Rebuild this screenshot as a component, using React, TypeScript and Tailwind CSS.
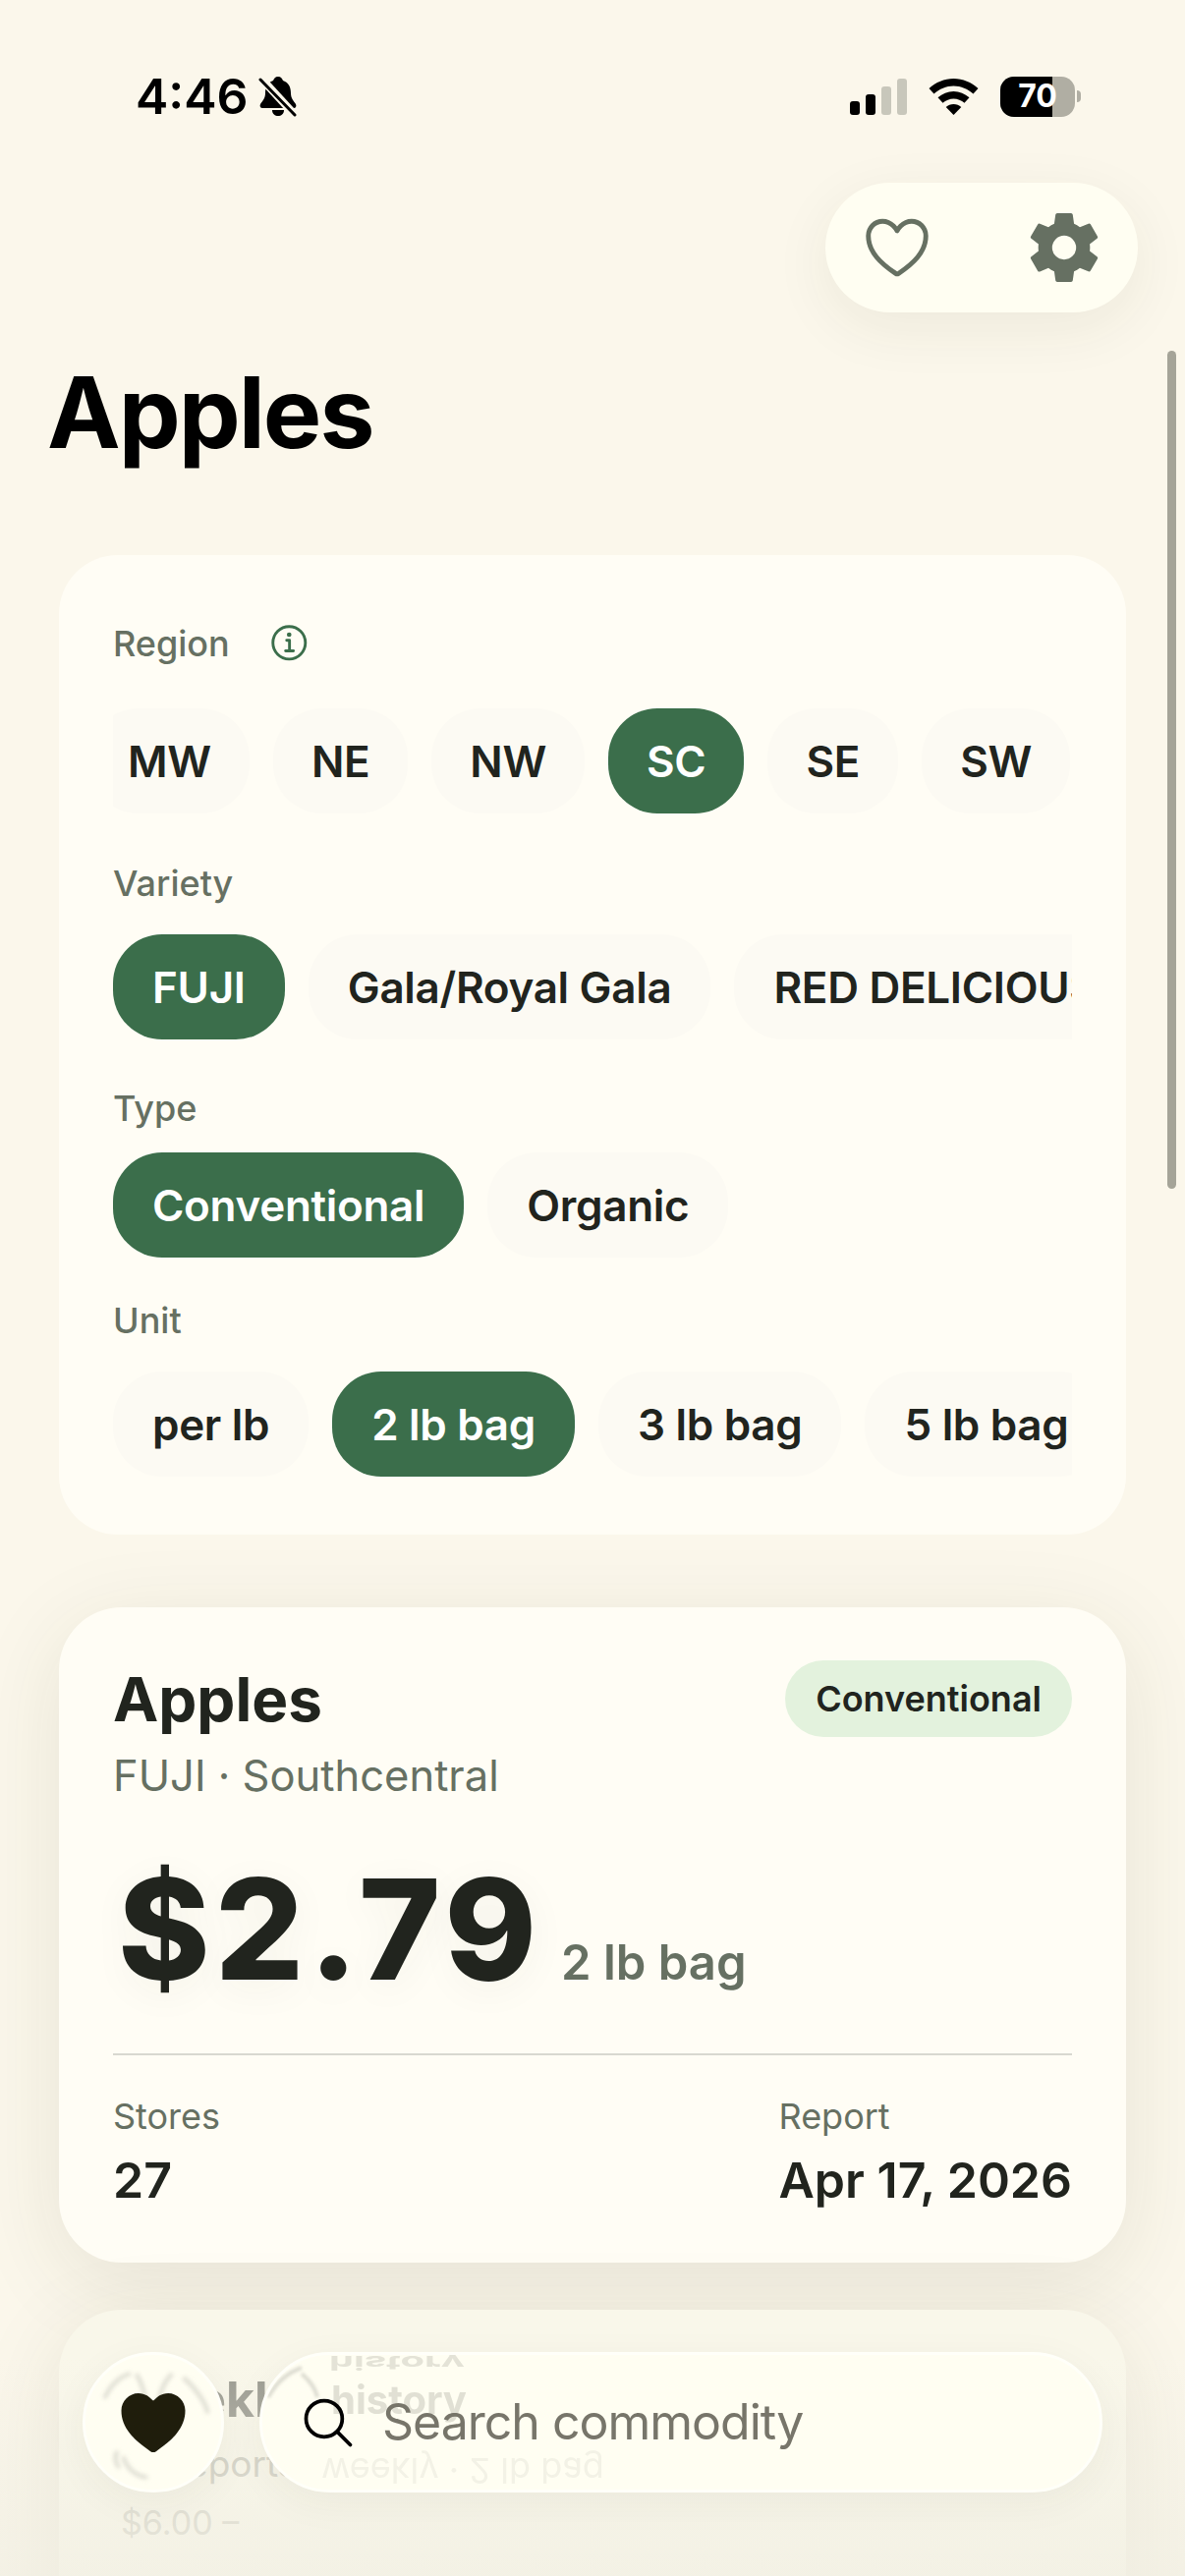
import { IoHeart, IoHeartOutline, IoInformationCircleOutline, IoSearchOutline, IoSettingsSharp } from "react-icons/io5";

const regions = ["MW", "NE", "NW", "SC", "SE", "SW"];
const varieties = ["FUJI", "Gala/Royal Gala", "RED DELICIOUS"];
const types = ["Conventional", "Organic"];
const units = ["per lb", "2 lb bag", "3 lb bag", "5 lb bag"];

function Chip({ label, active, tight }: { label: string; active?: boolean; tight?: boolean }) {
  return (
    <div
      className={`h-[107px] shrink-0 flex items-center rounded-[50px] text-[44px] font-[570] tracking-[-0.3px] ${tight ? "px-[39px]" : "px-[40px]"} ${
        active ? "bg-[#3b6e4b] text-white" : "bg-[#fcfaf3] text-[#21241e]"
      }`}
    >
      {label}
    </div>
  );
}

function ChipRow({ items, active, className, tight }: { items: string[]; active: string; className?: string; tight?: boolean }) {
  return (
    <div className="overflow-hidden">
      <div className={`flex gap-[24px] ${className ?? ""}`}>
        {items.map((item) => (
          <Chip key={item} label={item} active={item === active} tight={tight} />
        ))}
      </div>
    </div>
  );
}

function StatusBar() {
  return (
    <div className="h-[42px] flex items-center justify-between pl-[138px] pr-[106px]">
      <div className="flex items-center gap-[10px]">
        <span className="text-[50px] font-semibold text-black leading-none">4:46</span>
        <svg width="40" height="42" viewBox="0 0 40 42">
          <path d="M20 1c3 0 4 2 5 4 6 2 8 7 8 13 0 5 3 8 5 11 1 2 0 4-2 4H4c-2 0-3-2-2-4 2-3 5-6 5-11 0-6 2-11 8-13 1-2 2-4 5-4z" fill="#000" />
          <path d="M14 35h12c0 4-3 6-6 6s-6-2-6-6z" fill="#000" />
          <path d="M3 3l34 37" stroke="#fbf7eb" strokeWidth="8" />
          <path d="M2 4l35 36" stroke="#000" strokeWidth="3" strokeLinecap="round" />
        </svg>
      </div>
      <div className="flex items-center gap-[22px]">
        <div className="flex items-end gap-[6px] h-[37px]">
          <div className="w-[10px] h-[14px] rounded-[3px] bg-black" />
          <div className="w-[10px] h-[21px] rounded-[3px] bg-black" />
          <div className="w-[10px] h-[29px] rounded-[3px] bg-[#c8c7bb]" />
          <div className="w-[10px] h-[37px] rounded-[3px] bg-[#c8c7bb]" />
        </div>
        <svg width="51" height="37" viewBox="0 0 51 37">
          <path d="M25.5 0C16 0 7.5 3.7 0.5 10l5 5.5C11 10.5 18 7.5 25.5 7.5s14.500 3 20 8l5-5.500C43.500 3.700 35 0 25.500 0z" fill="#000" />
          <path d="M25.500 13c-6 0-11.500 2.300-16 6.300l5 5.500c3-2.700 7-4.300 11-4.300s8 1.600 11 4.300l5-5.500c-4.500-4-10-6.300-16-6.300z" fill="#000" />
          <path d="M25.500 26c-3 0-5.700 1-7.800 3l7.800 8 7.800-8c-2.100-2-4.800-3-7.800-3z" fill="#000" />
        </svg>
        <div className="flex items-center gap-[2px]">
          <div className="relative w-[76px] h-[41px] rounded-[14px] overflow-hidden bg-[#b0aea3]">
            <div className="h-full w-[53px] bg-black" />
            <span className="absolute inset-0 flex items-center justify-center text-[32px] font-bold text-white leading-none">70</span>
          </div>
          <div className="w-[4px] h-[12px] rounded-r-full bg-[#b0aea3]" />
        </div>
      </div>
    </div>
  );
}

function ActionPill() {
  return (
    <div className="flex justify-end pr-[48px] mt-[67px]">
      <div className="w-[318px] h-[132px] rounded-[66px] bg-[#fffef2] flex items-center justify-between pl-[34px] pr-[36px] shadow-[0_16px_60px_rgba(60,60,30,0.07)]">
        <IoHeartOutline className="text-[78px] text-[#667062]" />
        <IoSettingsSharp className="text-[78px] text-[#667062]" />
      </div>
    </div>
  );
}

function FilterCard() {
  return (
    <section className="mx-[60px] mt-[85px] h-[997px] rounded-[60px] bg-[#fffdf5] px-[55px] pt-[67px]">
      <div className="flex items-center gap-[38px] h-[46px]">
        <span className="text-[36px] font-[550] text-[#667062]">Region</span>
        <IoInformationCircleOutline className="text-[46px] text-[#3b6e4b]" />
      </div>
      <div className="mt-[43px]">
        <ChipRow items={regions} active="SC" className="-ml-[24px]" tight />
      </div>
      <div className="mt-[51px] h-[40px] flex items-center text-[36px] font-[550] text-[#667062]">Variety</div>
      <div className="mt-[32px]">
        <ChipRow items={varieties} active="FUJI" />
      </div>
      <div className="mt-[50px] h-[40px] flex items-center text-[36px] font-[550] text-[#667062]">Type</div>
      <div className="mt-[25px]">
        <ChipRow items={types} active="Conventional" />
      </div>
      <div className="mt-[44px] h-[40px] flex items-center text-[36px] font-[550] text-[#667062]">Unit</div>
      <div className="mt-[32px]">
        <ChipRow items={units} active="2 lb bag" />
      </div>
    </section>
  );
}

function PriceCard() {
  return (
    <section className="mx-[60px] mt-[74px] h-[667px] rounded-[64px] bg-[#fffdf5] px-[55px] pt-[54px] shadow-[0_20px_90px_rgba(60,60,30,0.1)]">
      <div className="flex items-start justify-between">
        <div>
          <div className="text-[62px] font-bold leading-[80px] text-[#21241e]">Apples</div>
          <div className="text-[43.5px] leading-[56px] mt-[9px] text-[#667062]">FUJI · Southcentral</div>
        </div>
        <div className="h-[78px] px-[31px] rounded-[39px] bg-[#e3f2dd] flex items-center text-[36px] font-semibold text-[#21241e]">Conventional</div>
      </div>
      <div className="flex items-baseline mt-[53px] ml-[5px]">
        <span className="text-[142px] font-extrabold leading-[150px] tracking-[5px] text-[#21241e] [text-shadow:0_8px_40px_rgba(60,60,30,0.05)]">$2.79</span>
        <span className="ml-[20px] text-[49px] font-[570] text-[#667062]">2 lb bag</span>
      </div>
      <div className="h-[2px] bg-[#d8d8d0] mt-[52px]" />
      <div className="flex justify-between mt-[37px]">
        <div>
          <div className="text-[36px] leading-[50px] text-[#667062]">Stores</div>
          <div className="text-[50px] leading-[64px] mt-[8px] font-semibold text-[#21241e]">27</div>
        </div>
        <div>
          <div className="text-[36px] leading-[50px] text-[#667062]">Report</div>
          <div className="text-[50px] leading-[64px] mt-[8px] font-semibold text-[#21241e]">Apr 17, 2026</div>
        </div>
      </div>
    </section>
  );
}

function NextCard() {
  return (
    <section className="mx-[60px] mt-[48px] h-[400px] rounded-[64px] bg-[#f9f7ea] pl-[61px] pr-[55px] pt-[56px] shadow-[0_20px_90px_rgba(60,60,30,0.1)]">
      <div className="text-[50px] font-bold leading-[70px] text-[#9a9a90]">Weekly history</div>
      <div className="text-[37px] leading-[50px] mt-[6px] -ml-[1px] text-[#c9c8bc]">45 reports · weekly · 2 lb bag</div>
      <div className="text-[34px] leading-[50px] mt-[10px] ml-[2px] text-[#d2d1c5]">$6.00 –</div>
    </section>
  );
}

function SearchBar() {
  return (
    <div className="absolute left-[84px] top-[2394px] flex gap-[36px]">
      <div className="relative w-[144px] h-[143px] rounded-full bg-[#fffef2] border-[3px] border-[#fffff9] flex items-center justify-center overflow-hidden shadow-[0_10px_40px_rgba(60,60,30,0.05)]">
        <svg className="absolute inset-0 blur-[2px]" width="138" height="137" viewBox="0 0 144 143" fill="none" stroke="#dcdbd0" strokeWidth="4">
          <path d="M20 46C28 30 38 22 48 20" />
          <path d="M54 20C60 30 64 44 64 56" />
          <path d="M78 56C78 40 84 28 92 20" />
          <path d="M104 24C118 36 128 52 130 62" />
          <path d="M40 108C44 122 56 130 66 130" />
          <path d="M34 102C30 108 32 116 36 120" />
        </svg>
        <IoHeart className="relative text-[80px] text-[#1f1d0c]" />
      </div>
      <div className="relative w-[858px] h-[143px] rounded-[72px] bg-[#fffef2] border-[3px] border-[#fffff9] flex items-center pl-[37px] gap-[25px] overflow-hidden shadow-[0_10px_40px_rgba(60,60,30,0.05)]">
        <svg className="absolute left-0 top-0 blur-[1.5px]" width="70" height="60" viewBox="0 0 70 60" fill="none" stroke="#dddcd1" strokeWidth="4">
          <path d="M6 43C14 28 26 18 40 13" />
          <path d="M40 19C48 26 54 34 56 43" />
        </svg>
        <div className="absolute left-[68px] top-0 h-[16px] w-[170px] overflow-hidden">
          <span className="block -mt-[12px] -scale-y-50 text-[40px] font-bold text-[#e4e3d7] leading-none">history</span>
        </div>
        <span className="absolute left-[70px] top-[26px] text-[40px] font-bold text-[#e1e0d4] leading-none blur-[0.5px]">history</span>
        <span className="absolute left-[60px] top-[100px] -scale-y-100 text-[36px] text-[#f3f2e6] leading-none whitespace-nowrap">weekly · 2 lb bag</span>
        <IoSearchOutline className="relative text-[60px] text-black shrink-0" />
        <span className="relative text-[50px] tracking-[-1px] text-[#77756a]">Search commodity</span>
      </div>
    </div>
  );
}

export default function App() {
  return (
    <div className="relative w-[1206px] h-[2622px] overflow-hidden bg-[#fbf7eb] font-['Inter',sans-serif] pt-[77px]">
      <StatusBar />
      <ActionPill />
      <h1 className="mt-[42px] pl-[48px] text-[100px] font-bold leading-[120px] tracking-[-2px] text-black">Apples</h1>
      <FilterCard />
      <PriceCard />
      <NextCard />
      <div className="absolute left-0 right-0 top-[2400px] bottom-0 bg-linear-to-b from-[#f1efe3]/0 to-[#f1efe3]/70" />
      <SearchBar />
      <div className="absolute right-[9px] top-[357px] w-[9px] h-[853px] rounded-full bg-[#a5a498]" />
    </div>
  );
}
